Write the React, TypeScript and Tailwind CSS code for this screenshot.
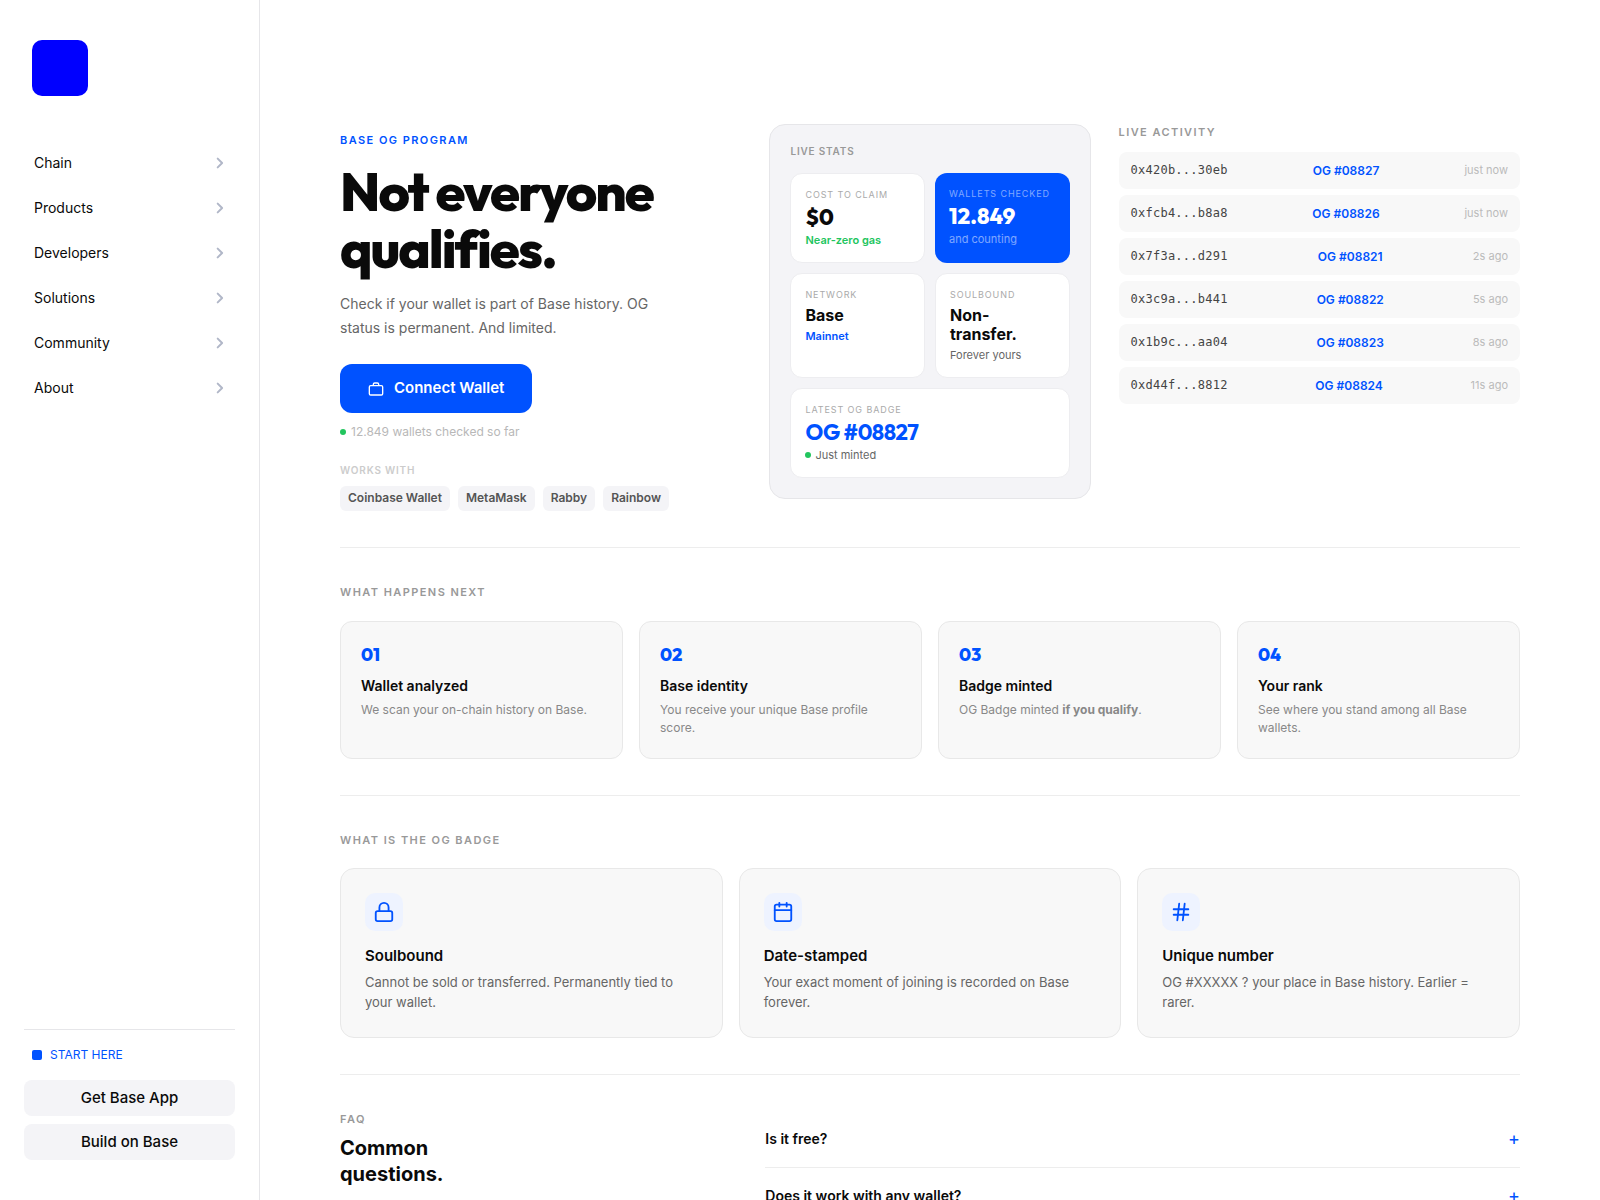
import { ReactNode } from "react";
import { clsx } from "clsx";

type StatTileProps = {
  label: string;
  value: string;
  note: ReactNode;
  valueClass?: string;
  noteClass?: string;
  className?: string;
};

const navItems = [
  "Chain",
  "Products",
  "Developers",
  "Solutions",
  "Community",
  "About",
];

const wallets = ["Coinbase Wallet", "MetaMask", "Rabby", "Rainbow"];

const activity = [
  { address: "0x420b...30eb", badge: "OG #08827", time: "just now" },
  { address: "0xfcb4...b8a8", badge: "OG #08826", time: "just now" },
  { address: "0x7f3a...d291", badge: "OG #08821", time: "2s ago" },
  { address: "0x3c9a...b441", badge: "OG #08822", time: "5s ago" },
  { address: "0x1b9c...aa04", badge: "OG #08823", time: "8s ago" },
  { address: "0xd44f...8812", badge: "OG #08824", time: "11s ago" },
];

const steps = [
  {
    title: "Wallet analyzed",
    text: <>We scan your on-chain history on Base.</>,
  },
  {
    title: "Base identity",
    text: <>You receive your unique Base profile score.</>,
  },
  {
    title: "Badge minted",
    text: (
      <>
        OG Badge minted <strong className="font-bold">if you qualify</strong>.
      </>
    ),
  },
  {
    title: "Your rank",
    text: <>See where you stand among all Base wallets.</>,
  },
];

const features = [
  {
    title: "Soulbound",
    text: "Cannot be sold or transferred. Permanently tied to your wallet.",
    icon: (
      <>
        <rect x="3" y="11" width="18" height="11" rx="2" />
        <path d="M7 11V7a5 5 0 0 1 10 0v4" />
      </>
    ),
  },
  {
    title: "Date-stamped",
    text: "Your exact moment of joining is recorded on Base forever.",
    icon: (
      <>
        <rect x="3" y="4" width="18" height="18" rx="2" />
        <path d="M16 2v4M8 2v4M3 10h18" />
      </>
    ),
  },
  {
    title: "Unique number",
    text: "OG #XXXXX ? your place in Base history. Earlier = rarer.",
    icon: <path d="M4 9h16M4 15h16M10 3 8 21M16 3l-2 18" />,
  },
];

const questions = ["Is it free?", "Does it work with any wallet?"];

const SectionLabel = ({ children }: { children: ReactNode }) => (
  <h2 className="text-[11px] leading-4 font-semibold tracking-[0.13em] text-[#999] uppercase">
    {children}
  </h2>
);

const Dot = () => (
  <span className="inline-block size-1.5 shrink-0 rounded-full bg-[#22c55e]" />
);

const displayValue =
  "font-['Outfit','Inter',sans-serif] text-[22px] leading-[23px]";
const textValue = "text-base leading-[19px] font-bold text-[#0a0a0a]";

const StatTile = ({
  label,
  value,
  note,
  valueClass = textValue,
  noteClass = "text-[#666]",
  className = "border border-[#ededf0] bg-white text-[#aaa]",
}: StatTileProps) => (
  <div className={clsx("rounded-xl p-3.5", className)}>
    <p className="mb-1 text-[9px] leading-[14px] tracking-[0.1em] whitespace-nowrap uppercase">
      {label}
    </p>
    <p className={valueClass}>{value}</p>
    <p
      className={clsx(
        "mt-[3px] flex items-center gap-1 text-[11px] leading-4",
        noteClass,
      )}
    >
      {note}
    </p>
  </div>
);

const Sidebar = () => (
  <aside className="flex w-[260px] shrink-0 flex-col border-r border-[#e6e6e9] px-6 py-10">
    <a
      href="#"
      aria-label="Base"
      className="ml-2 size-14 rounded-[10px] bg-[#0000ff]"
    />
    <nav className="mt-11 flex flex-col">
      {navItems.map((item) => (
        <a
          key={item}
          href="#"
          className="flex h-[45px] items-center justify-between px-2.5 text-sm text-[#0a0a0a]"
        >
          {item}
          <svg
            viewBox="0 0 10 14"
            fill="none"
            stroke="#b1b7c8"
            strokeWidth="2"
            strokeLinecap="round"
            strokeLinejoin="round"
            className="h-3.5 w-2.5"
          >
            <path d="m2.7 2.6 4.4 4.4-4.4 4.4" />
          </svg>
        </a>
      ))}
    </nav>
    <div className="mt-auto flex flex-col gap-2 border-t border-[#e6e6e9] pt-4">
      <p className="mb-2 flex items-center gap-2 px-2 text-xs leading-[18px] text-[#0052ff]">
        <span className="size-2.5 rounded-xs bg-[#0052ff]" />
        START HERE
      </p>
      <button className="h-9 rounded-lg bg-[#f4f4f7] text-[15px] font-medium text-[#0a0a0a]">
        Get Base App
      </button>
      <button className="h-9 rounded-lg bg-[#f4f4f7] text-[15px] font-medium text-[#0a0a0a]">
        Build on Base
      </button>
    </div>
  </aside>
);

const Hero = () => (
  <section className="grid grid-cols-[5fr_4fr_5fr] items-start gap-7 pb-9">
    <div className="pt-2">
      <p className="text-[11px] leading-4 font-semibold tracking-[0.13em] text-[#0052ff]">
        BASE OG PROGRAM
      </p>
      <h1 className="mt-[15px] font-['Outfit','Inter',sans-serif] text-[54px] leading-[57px] font-extrabold tracking-[-2px] text-[#0a0a0a]">
        Not everyone qualifies.
      </h1>
      <p className="mt-[15px] max-w-[330px] text-sm leading-6 text-[#666]">
        Check if your wallet is part of Base history. OG status is permanent.
        And limited.
      </p>
      <button className="mt-6 flex h-[49px] items-center gap-2.5 rounded-xl bg-[#0052ff] px-7 text-[15px] font-semibold text-white">
        <svg
          viewBox="0 0 24 24"
          fill="none"
          stroke="currentColor"
          strokeWidth="2"
          className="size-4"
        >
          <rect x="2" y="7" width="20" height="14" rx="2" />
          <path d="M16 7V5a2 2 0 0 0-2-2h-4a2 2 0 0 0-2 2v2" />
        </svg>
        Connect Wallet
      </button>
      <p className="mt-[11px] flex items-center gap-[5px] text-xs leading-4 text-[#b8b8b8]">
        <Dot />
        12.849 wallets checked so far
      </p>
      <p className="mt-6 mb-2.5 text-[10px] leading-3 font-semibold tracking-[0.08em] text-[#ccc]">
        WORKS WITH
      </p>
      <ul className="flex flex-wrap gap-2">
        {wallets.map((wallet) => (
          <li
            key={wallet}
            className="rounded-md bg-[#f4f4f7] px-2 pb-px text-xs leading-6 font-semibold text-[#555]"
          >
            {wallet}
          </li>
        ))}
      </ul>
    </div>

    <div className="rounded-2xl border border-[#e6e6e9] bg-[#f4f4f7] p-5">
      <h2 className="mb-4 text-[10px] leading-3 font-semibold tracking-[0.08em] text-[#999]">
        LIVE STATS
      </h2>
      <div className="grid grid-cols-2 gap-2.5">
        <StatTile
          label="Cost to claim"
          value="$0"
          note="Near-zero gas"
          valueClass={clsx(displayValue, "font-extrabold text-[#0a0a0a]")}
          noteClass="font-semibold text-[#22c55e]"
        />
        <StatTile
          label="Wallets checked"
          value="12.849"
          note="and counting"
          className="bg-[#0052ff] text-white/50"
          valueClass={clsx(displayValue, "font-extrabold text-white")}
          noteClass="text-white/50"
        />
        <StatTile
          label="Network"
          value="Base"
          note="Mainnet"
          noteClass="font-semibold text-[#0052ff]"
        />
        <StatTile
          label="Soulbound"
          value="Non-transfer."
          note="Forever yours"
        />
        <StatTile
          label="Latest OG badge"
          value="OG #08827"
          note={
            <>
              <Dot /> Just minted
            </>
          }
          valueClass={clsx(
            displayValue,
            "font-bold tracking-[-0.02em] text-[#0052ff]",
          )}
          className="col-span-2 border border-[#ededf0] bg-white text-[#aaa]"
        />
      </div>
    </div>

    <div>
      <SectionLabel>Live activity</SectionLabel>
      <ul className="mt-3 flex flex-col gap-1.5">
        {activity.map((row) => (
          <li
            key={row.address}
            className="flex items-center justify-between rounded-lg bg-[#f8f8f8] px-3 py-2"
          >
            <span className="font-['DejaVu_Sans_Mono',monospace] text-xs leading-[21px] tracking-[0.02em] text-[#444]">
              {row.address}
            </span>
            <span className="text-xs leading-[21px] font-semibold text-[#0052ff]">
              {row.badge}
            </span>
            <span className="text-[11px] leading-[21px] text-[#bbb]">
              {row.time}
            </span>
          </li>
        ))}
      </ul>
    </div>
  </section>
);

const App = () => {
  return (
    <div className="flex h-screen overflow-hidden bg-white font-['Inter',sans-serif] text-[#0a0a0a]">
      <Sidebar />
      <main className="min-w-0 flex-1 overflow-y-auto px-20 pt-[124px] [scrollbar-width:none]">
        <Hero />

        <section className="border-t border-[#ededed] py-9">
          <SectionLabel>What happens next</SectionLabel>
          <div className="mt-[21px] grid grid-cols-4 gap-4">
            {steps.map((step, index) => (
              <div
                key={step.title}
                className="rounded-xl border border-[#e8e8e8] bg-[#f8f8f8] p-5"
              >
                <p className="font-['Outfit','Inter',sans-serif] text-lg leading-[26px] font-extrabold text-[#0052ff]">
                  0{index + 1}
                </p>
                <h3 className="mt-2 text-sm leading-5 font-semibold">
                  {step.title}
                </h3>
                <p className="mt-[5px] mb-px text-xs leading-[18px] text-[#888]">
                  {step.text}
                </p>
              </div>
            ))}
          </div>
        </section>

        <section className="border-t border-[#ededed] py-9">
          <SectionLabel>What is the OG badge</SectionLabel>
          <div className="mt-5 grid grid-cols-3 gap-4">
            {features.map((feature) => (
              <div
                key={feature.title}
                className="rounded-[14px] border border-[#e8e8e8] bg-[#f8f8f8] p-6"
              >
                <div className="flex size-[38px] items-center justify-center rounded-[10px] bg-[#eef3ff]">
                  <svg
                    viewBox="0 0 24 24"
                    fill="none"
                    stroke="#0052ff"
                    strokeWidth="2"
                    strokeLinecap="round"
                    strokeLinejoin="round"
                    className="size-[22px]"
                  >
                    {feature.icon}
                  </svg>
                </div>
                <h3 className="mt-[15px] text-[15px] leading-5 font-semibold">
                  {feature.title}
                </h3>
                <p className="mt-1.5 mb-px text-[13px] leading-5 text-[#666]">
                  {feature.text}
                </p>
              </div>
            ))}
          </div>
        </section>

        <section className="grid grid-cols-[1fr_2fr] gap-12 border-t border-[#ededed] py-9">
          <div>
            <SectionLabel>FAQ</SectionLabel>
            <p className="mt-2 max-w-[140px] text-xl leading-[26px] font-bold">
              Common questions.
            </p>
          </div>
          <div>
            {questions.map((question) => (
              <button
                key={question}
                className="flex w-full items-center justify-between border-b border-[#ededed] py-[18px] text-sm leading-5 font-semibold"
              >
                {question}
                <span className="text-lg leading-5 font-normal text-[#0052ff]">
                  +
                </span>
              </button>
            ))}
          </div>
        </section>
      </main>
    </div>
  );
};

export default App;
